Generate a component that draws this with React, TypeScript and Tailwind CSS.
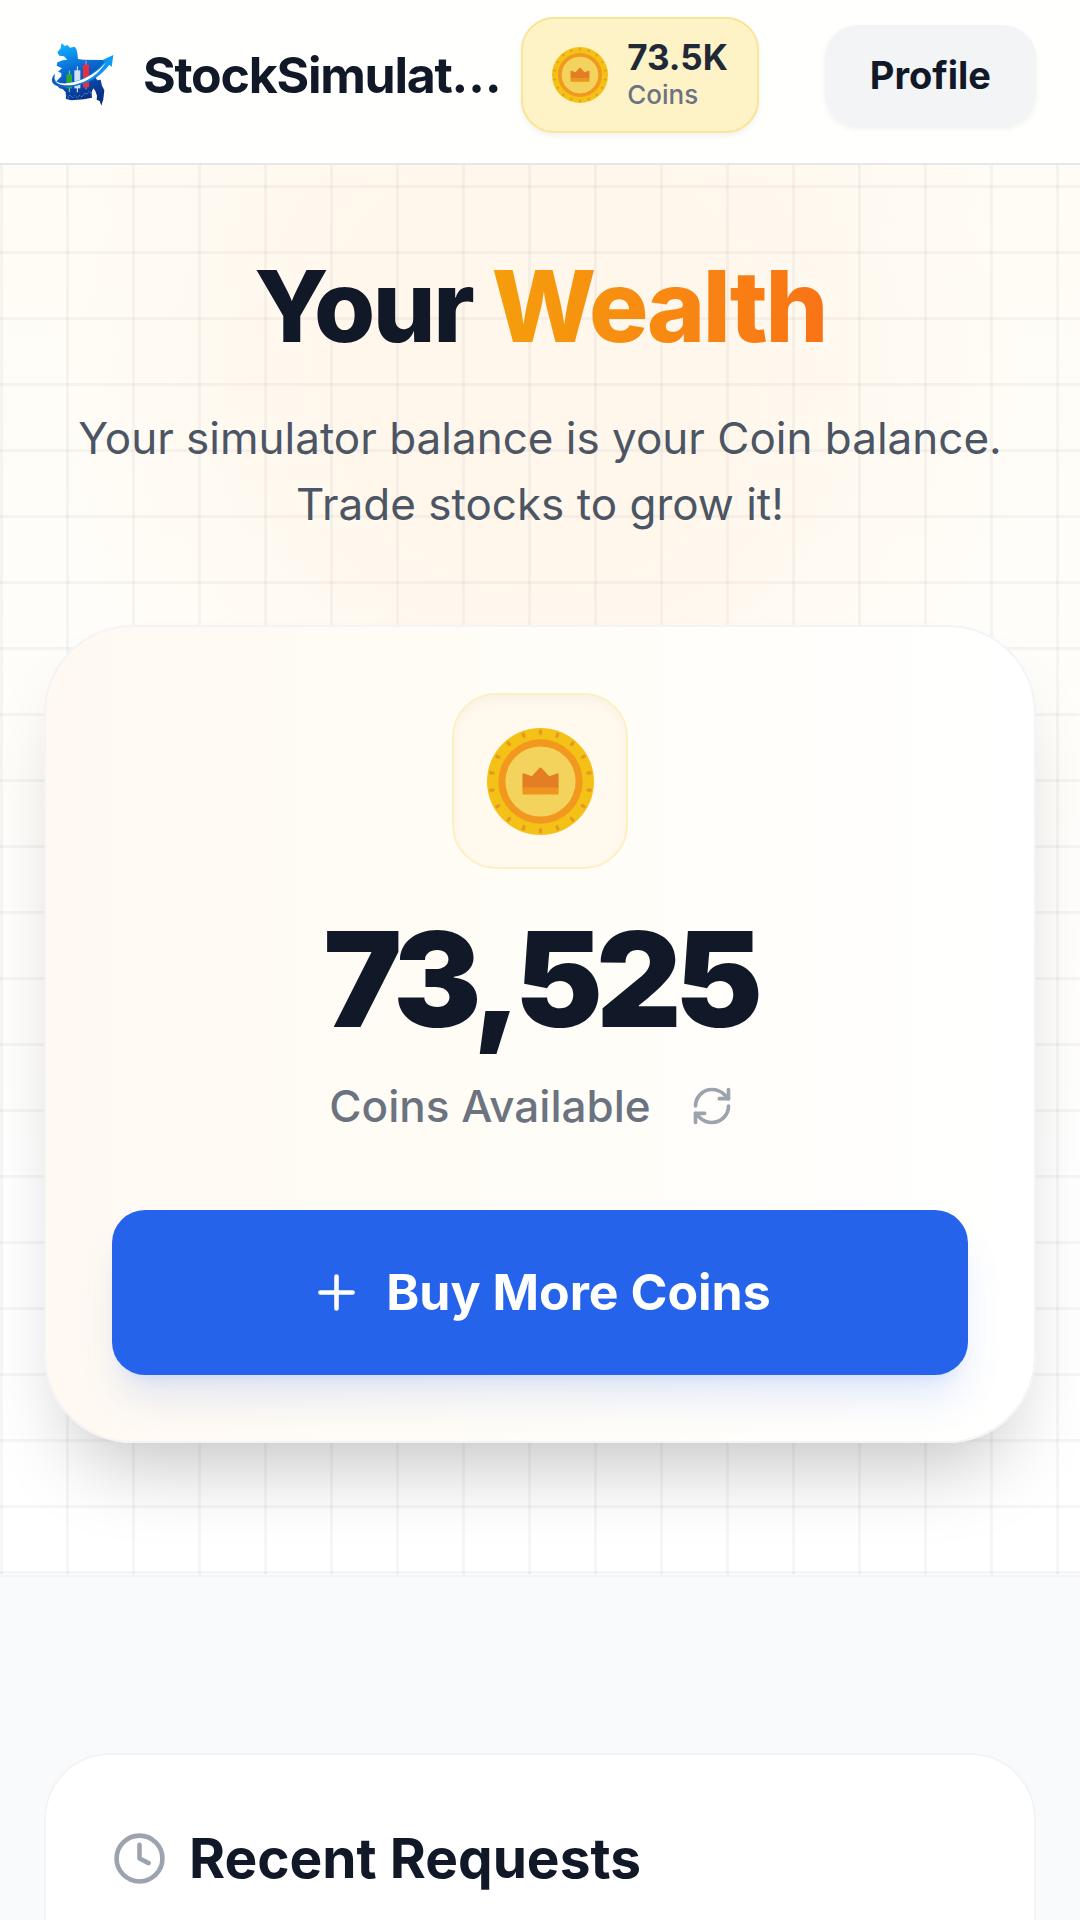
import { Clock, Plus, RefreshCw } from 'lucide-react';

const TICKS = Array.from({ length: 18 }, (_, i) => i * 20);

function BrandLogo({ className }: { className?: string }) {
  return (
    <svg className={className} viewBox="42 50 231 231" fill="none" aria-hidden="true">
      <defs>
        <linearGradient id="land" x1="110" y1="70" x2="170" y2="240" gradientUnits="userSpaceOnUse">
          <stop offset="0" stopColor="#12b0ff" />
          <stop offset="0.4" stopColor="#0a6fd6" />
          <stop offset="0.75" stopColor="#0b45a8" />
          <stop offset="1" stopColor="#082f80" />
        </linearGradient>
        <linearGradient id="swoosh" x1="65" y1="180" x2="250" y2="110" gradientUnits="userSpaceOnUse">
          <stop offset="0" stopColor="#0a5cc4" />
          <stop offset="0.5" stopColor="#0e86e6" />
          <stop offset="1" stopColor="#0aa0f5" />
        </linearGradient>
      </defs>
      <path
        d="M95 68L104 77L112 74L120 82L134 79L139 86L142 98L144 116L160 118L215 119L236 118L232 134L212 156L197 174L203 180L212 178L216 196L223 210L220 236L214 256L209 242L200 238L201 226L196 212L190 204L185 216L186 232L162 237L124 240L108 236L107 216L98 206L88 204L80 192L82 180L94 168L94 158L84 154L96 144L80 136L82 126L98 120L112 118L102 108L88 106L82 96L92 84Z"
        fill="url(#land)"
      />
      <path d="M110 226l6 6 4-8 8 8 6-6 8 6 8-8 6 6 8-12 6 4 6-8 8 6" stroke="#6db4ec" strokeWidth="3" strokeDasharray="3 4" />
      <path d="M118 151v64" stroke="#8fd78a" strokeWidth="3" />
      <path d="M109 162h17v42h-17z" fill="#2ea836" />
      <path d="M142 138v78" stroke="#e4efff" strokeWidth="3" />
      <path d="M133 150h18v54h-18z" fill="#d3e0f7" />
      <path d="M168 121v86" stroke="#ff8f9a" strokeWidth="3" />
      <path d="M159 133h18v68h-18z" fill="#ea2d3f" />
      <path
        d="M76 160C65 168 62 182 71 191C83 203 112 204 140 196C185 185 217 162 238 133L245 140L250 104L216 120L224 125C200 153 168 175 130 185C105 191 84 191 76 180C72 174 73 167 76 160Z"
        fill="url(#swoosh)"
      />
      <path d="M74 176C78 190 102 192 130 186C170 176 202 156 228 126C206 162 172 185 134 193C104 198 76 194 74 176Z" fill="#fff" />
    </svg>
  );
}

function CoinIcon({ className }: { className?: string }) {
  return (
    <svg className={className} viewBox="-160 -160 320 320" aria-hidden="true">
      <circle r="160" fill="#f4c216" />
      {TICKS.map((angle) => (
        <path key={angle} d="M-5-155h10v12l-5 5-5-5z" fill="#e39a22" transform={`rotate(${angle})`} />
      ))}
      <circle r="126" fill="#f2981f" />
      <circle r="105" fill="#f3d35b" />
      <path d="M-54-22q0-4 5-2l23 8L-4-40q4-4 8 0l22 24 23-8q5-2 5 2v42H-54z" fill="#e47e25" />
      <path d="M-54 18H54v17q0 4-4 4H-50q-4 0-4-4z" fill="#ef951f" />
    </svg>
  );
}

function Header() {
  return (
    <header className="flex items-center border-b-2 border-[#e5e7eb] bg-[#fffffd] px-[44px] pt-[17px] pb-[30px]">
      <a href="#home" className="flex min-w-0 flex-1 items-center gap-[22px]">
        <BrandLogo className="size-[77px] shrink-0" />
        <span className="text-[50px] leading-[66px] font-bold tracking-tight whitespace-nowrap">StockSimulat…</span>
      </a>
      <a
        href="#coins"
        className="ml-[20px] flex h-[116px] shrink-0 items-center gap-[19px] rounded-[33px] border-2 border-[#fae596] bg-[#fef2c7] px-[29px] shadow-[0_3px_6px_rgba(0,0,0,0.06)]"
      >
        <CoinIcon className="size-[56px]" />
        <span className="flex flex-col pt-0.5">
          <span className="text-[35px] leading-[38px] font-bold text-[#1f2937]">73.5K</span>
          <span className="text-[26px] leading-[38px] font-medium text-[#6b7280]">Coins</span>
        </span>
      </a>
      <button
        type="button"
        className="ml-[66px] h-[101px] shrink-0 rounded-[33px] bg-[#f3f4f6] px-[45px] text-[38px] font-bold shadow-[0_3px_6px_rgba(0,0,0,0.06)]"
      >
        Profile
      </button>
    </header>
  );
}

function BalanceCard() {
  return (
    <div className="flex flex-col items-center rounded-[88px] border-2 border-[#f3f4f6] bg-linear-to-r from-[#fff9f2] via-[#fffdf7] to-white p-[66px] shadow-[0_48px_80px_-30px_rgba(0,0,0,0.25)]">
      <div className="flex size-[176px] items-center justify-center rounded-[44px] border-2 border-[#fdf0c0] bg-[#fff9ee] shadow-[inset_0_6px_11px_rgba(0,0,0,0.03)]">
        <CoinIcon className="size-[107px]" />
      </div>
      <p className="mt-[44px] text-[132px] leading-[132px] font-black tracking-tighter">73,525</p>
      <div className="mt-[22px] flex items-center gap-[22px]">
        <span className="text-[44px] leading-[78px] font-medium text-[#6b7280]">Coins Available</span>
        <button type="button" aria-label="Refresh balance" className="p-[17px] text-[#9ca3af]">
          <RefreshCw className="size-[44px]" />
        </button>
      </div>
      <button
        type="button"
        className="mt-[65px] flex h-[165px] w-full items-center justify-center gap-[22px] rounded-[33px] bg-[#2563eb] text-[50px] font-bold text-white shadow-[0_28px_41px_-8px_rgba(37,99,235,0.15),0_11px_16px_-11px_rgba(37,99,235,0.15)]"
      >
        <Plus className="size-[55px]" />
        Buy More Coins
      </button>
    </div>
  );
}

export default function App() {
  return (
    <div className="min-h-screen bg-[#f9fafb] font-['Inter',sans-serif] text-[#111827]">
      <Header />
      <main>
        <section className="relative isolate overflow-hidden border-b-2 border-[#f3f4f6] bg-linear-to-b from-[#fffcf5] to-white to-75% px-[44px] pt-[86px] pb-[132px]">
          <div className="absolute -top-[300px] left-1/2 -z-10 size-[1000px] -translate-x-1/2 rounded-full bg-[radial-gradient(closest-side,#fff7ec_40%,transparent)]" />
          <div className="absolute inset-0 -z-10 bg-[linear-gradient(to_right,rgba(0,0,0,0.035)_3px,transparent_3px),linear-gradient(to_bottom,rgba(0,0,0,0.035)_3px,transparent_3px)] bg-[size:66px_66px] bg-[position:0_20px]" />
          <div className="text-center">
            <h1 className="text-[99px] leading-[110px] font-extrabold tracking-tight">
              Your{' '}
              <span className="bg-linear-to-r from-[#f59e0b] to-[#f97316] bg-clip-text text-transparent">Wealth</span>
            </h1>
            <p className="mt-[44px] text-[44px] leading-[66px] text-[#4b5563]">
              Your simulator balance is your Coin balance. Trade stocks to grow it!
            </p>
          </div>
          <div className="mt-[88px]">
            <BalanceCard />
          </div>
        </section>
        <section className="px-[44px] pt-[176px]">
          <div className="rounded-t-[66px] border-2 border-b-0 border-[#f3f4f6] bg-white px-[66px] pt-[65px] pb-[24px]">
            <h2 className="flex items-center gap-[22px] text-[55px] leading-[76px] font-bold">
              <Clock className="size-[55px] text-[#9ca3af]" />
              Recent Requests
            </h2>
          </div>
        </section>
      </main>
    </div>
  );
}
